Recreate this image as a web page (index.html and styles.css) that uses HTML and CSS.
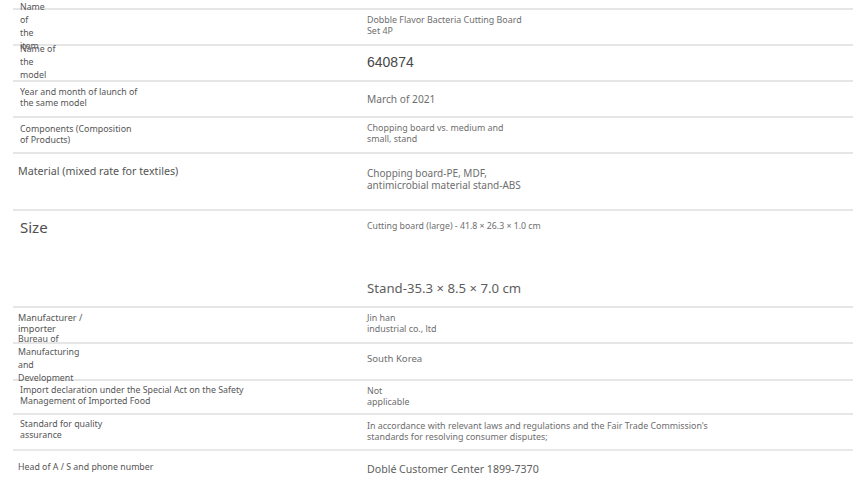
FILE: index.html
```html
<!DOCTYPE html>
<html>
<head>
<meta charset="utf-8">
<link rel="stylesheet" href="styles.css">
</head>
<body>
<div class="sheet">
  <div class="row r1">
    <div class="lab lh13 up1">Name<br>of<br>the<br>item</div>
    <div class="val s89 lh11 p4">Dobble Flavor Bacteria Cutting Board<br>Set 4P</div>
  </div>
  <div class="row r2">
    <div class="lab lh13 up2">Name of<br>the<br>model</div>
    <div class="val num p8">640874</div>
  </div>
  <div class="row r3">
    <div class="lab lh11 p5">Year and month of launch of<br>the same model</div>
    <div class="val s102 lh13 p10">March of 2021</div>
  </div>
  <div class="row r4">
    <div class="lab s89 lh11 p5">Components (Composition<br>of Products)</div>
    <div class="val s89 lh11 p4">Chopping board vs. medium and<br>small, stand</div>
  </div>
  <div class="row r5">
    <div class="lab lab-in s107 lh13 p11">Material (mixed rate for textiles)</div>
    <div class="val s10 lh12 p13">Chopping board-PE, MDF,<br>antimicrobial material stand-ABS</div>
  </div>
  <div class="row r6">
    <div class="lab big lh18 p7">Size</div>
    <div class="val p9">
      <div class="s875 lh11">Cutting board (large) - 41.8 × 26.3 × 1.0 cm</div>
      <div class="stand">Stand-35.3 × 8.5 × 7.0 cm</div>
    </div>
  </div>
  <div class="row r7">
    <div class="lab lab-in s91 lh11 p4">Manufacturer /<br>importer</div>
    <div class="val s89 lh11 p4">Jin han<br>industrial co., ltd</div>
  </div>
  <div class="row r8">
    <div class="lab lab-in lh13 up3">Bureau of<br>Manufacturing<br>and<br>Development</div>
    <div class="val s96 lh13 p8">South Korea</div>
  </div>
  <div class="row r9">
    <div class="lab lh11 p3">Import declaration under the Special Act on the Safety<br>Management of Imported Food</div>
    <div class="val s89 lh11 p3">Not<br>applicable</div>
  </div>
  <div class="row r10">
    <div class="lab lh11 p4">Standard for quality<br>assurance</div>
    <div class="val s89 lh11 p45">In accordance with relevant laws and regulations and the Fair Trade Commission's<br>standards for resolving consumer disputes;</div>
  </div>
  <div class="row r11">
    <div class="lab lab-in lh13 p9">Head of A / S and phone number</div>
    <div class="val s105 lh14 p10">Doblé Customer Center 1899-7370</div>
  </div>
</div>
</body>
</html>
```

FILE: styles.css
```css
html, body {
  margin: 0;
  padding: 0;
  background: #ffffff;
}
body {
  font-family: "Noto Sans", "Open Sans", sans-serif;
  color: #5b5b5b;
}
.sheet {
  margin: 8px 0 0 13px;
  width: 840px;
}
.row {
  display: grid;
  grid-template-columns: 354px 1fr;
  box-sizing: border-box;
  border-top: 2px solid #e6e6e6;
  align-items: start;
}
.r1 { height: 36px; }
.r2 { height: 36px; }
.r3 { height: 36px; }
.r4 { height: 36px; }
.r5 { height: 57px; }
.r6 { height: 97px; }
.r7 { height: 36px; }
.r8 { height: 37px; }
.r9 { height: 34px; }
.r10 { height: 36px; }
.r11 { height: 44px; border-top-color: #e9e9e9; }

.lab {
  padding-left: 7px;
  font-size: 8.8px;
  color: #555555;
}
.lab-in { padding-left: 5px; }
.val {
  font-size: 8.6px;
  color: #6e6e6e;
}
.s875 { font-size: 8.75px; }
.s89 { font-size: 8.9px; }
.s91 { font-size: 9.1px; }
.s96 { font-size: 9.6px; }
.s10 { font-size: 10px; }
.s102 { font-size: 10.2px; }
.s105 { font-size: 10.6px; color: #5e5e5e; }
.s107 { font-size: 10.7px; }
.big { font-size: 15px; color: #4e4e4e; }
.num {
  font-family: "Liberation Sans", Arial, sans-serif;
  font-size: 14px;
  line-height: 16px;
  color: #474747;
}
.stand {
  margin-top: 48px;
  font-size: 13.2px;
  line-height: 16px;
  color: #5e5e5e;
}

.lh11 { line-height: 11px; }
.lh12 { line-height: 12px; }
.lh13 { line-height: 13px; }
.lh14 { line-height: 14px; }
.lh18 { line-height: 18px; }

.up1 { margin-top: -9.5px; }
.up2 { margin-top: -3px; }
.up3 { margin-top: -11.5px; }
.p3 { padding-top: 3.5px; }
.p4 { padding-top: 4px; }
.p45 { padding-top: 4.5px; }
.p5 { padding-top: 5px; }
.p7 { padding-top: 7px; }
.p8 { padding-top: 8px; }
.p9 { padding-top: 9.5px; }
.p10 { padding-top: 10.5px; }
.p11 { padding-top: 11px; }
.p13 { padding-top: 13px; }
```
